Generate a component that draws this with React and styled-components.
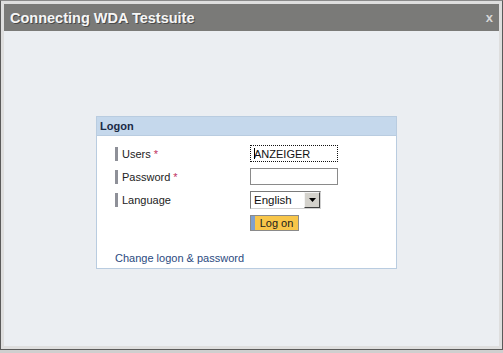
import React from "react";
import styled, { createGlobalStyle } from "styled-components";

const Global = createGlobalStyle`
  html, body { margin: 0; padding: 0; }
  body {
    background: #cfcfcf;
    font-family: "Liberation Sans", Arial, sans-serif;
    width: 503px;
    height: 353px;
    overflow: hidden;
  }
`;

const Window = styled.div`
  box-sizing: border-box;
  width: 503px;
  height: 350px;
  border: 1px solid #5a5a5a;
  border-top-color: #8a8a8a;
  background: #dedede;
  padding: 3px;
  display: flex;
  flex-direction: column;
`;

const TitleBar = styled.div`
  height: 27px;
  flex: none;
  background: #7a7a78;
  display: flex;
  align-items: center;
  justify-content: space-between;
  padding: 0 6px 0 6px;
`;

const Title = styled.div`
  color: #f6f6f6;
  font-weight: bold;
  font-size: 14.5px;
  text-shadow: 1px 1px 0 #4a4a4a;
`;

const Close = styled.div`
  color: #d6d6d6;
  font-weight: bold;
  font-size: 13px;
  line-height: 1;
  margin-top: -1px;
`;

const Content = styled.div`
  flex: 1;
  background: #ebeef2;
  padding: 85px 0 0 92px;
`;

const Panel = styled.div`
  box-sizing: border-box;
  width: 301px;
  height: 153px;
  border: 1px solid #b9cce0;
  background: #ffffff;
`;

const PanelHeader = styled.div`
  height: 19px;
  background: #c5d8ec;
  border-bottom: 1px solid #b9cce0;
  box-sizing: border-box;
  display: flex;
  align-items: center;
  padding-left: 3px;
  font-weight: bold;
  font-size: 11px;
  color: #1a2a46;
`;

const PanelBody = styled.div`
  padding: 9px 0 0 18px;
`;

const Form = styled.div`
  display: grid;
  grid-template-columns: 135px auto;
  grid-auto-rows: 17px;
  row-gap: 6px;
  align-items: center;
`;

const Label = styled.div`
  display: flex;
  align-items: center;
  gap: 4px;
  font-size: 11px;
  color: #222;
  height: 17px;
  &::before {
    content: "";
    width: 3px;
    height: 14px;
    background: #8e9098;
  }
`;

const Req = styled.span`
  color: #c03060;
  margin-left: 3px;
`;

const Input = styled.div`
  box-sizing: border-box;
  width: 88px;
  height: 17px;
  background: #fff;
  border: 1px ${(p) => (p.$focus ? "dotted #111" : "solid #8a8a8a")};
  font-size: 11px;
  color: #111;
  padding-left: 3px;
  display: flex;
  align-items: center;
  position: relative;
`;

const Caret = styled.span`
  position: absolute;
  left: 3px;
  top: 2px;
  width: 1px;
  height: 11px;
  background: #000;
`;

const Select = styled.div`
  box-sizing: border-box;
  width: 71px;
  height: 18px;
  border: 1px solid #7a7a7a;
  border-right-color: #d0d0d0;
  border-bottom-color: #d0d0d0;
  background: #fff;
  display: flex;
  align-items: center;
  justify-content: space-between;
  font-size: 11.5px;
  color: #111;
  padding-left: 3px;
  padding-right: 0;
`;

const DropBtn = styled.div`
  box-sizing: border-box;
  width: 16px;
  height: 16px;
  background: #d4d2cc;
  border: 1px solid;
  border-color: #f4f4f4 #404040 #404040 #f4f4f4;
  display: flex;
  align-items: center;
  justify-content: center;
`;

const Button = styled.div`
  box-sizing: border-box;
  width: 49px;
  height: 16px;
  border: 1px solid #8a8a8a;
  background: linear-gradient(to right, #7e9fcf 0 4px, #f8c64a 4px);
  display: flex;
  align-items: center;
  justify-content: center;
  padding-left: 4px;
  font-size: 11px;
  color: #1a1a1a;
`;

const Link = styled.div`
  margin-top: 21px;
  font-size: 11px;
  color: #2b4a80;
`;

export default function App() {
  return (
    <>
      <Global />
      <Window>
        <TitleBar>
          <Title>Connecting WDA Testsuite</Title>
          <Close>x</Close>
        </TitleBar>
        <Content>
          <Panel>
            <PanelHeader>Logon</PanelHeader>
            <PanelBody>
              <Form>
                <Label>
                  <span>
                    Users<Req>*</Req>
                  </span>
                </Label>
                <Input $focus>
                  <Caret />
                  ANZEIGER
                </Input>
                <Label>
                  <span>
                    Password<Req>*</Req>
                  </span>
                </Label>
                <Input />
                <Label>
                  <span>Language</span>
                </Label>
                <Select>
                  English
                  <DropBtn>
                    <svg width="7" height="4" viewBox="0 0 7 4">
                      <path d="M0 0H7L3.5 4Z" fill="#000" />
                    </svg>
                  </DropBtn>
                </Select>
                <span />
                <Button>Log on</Button>
              </Form>
              <Link>Change logon &amp; password</Link>
            </PanelBody>
          </Panel>
        </Content>
      </Window>
    </>
  );
}
